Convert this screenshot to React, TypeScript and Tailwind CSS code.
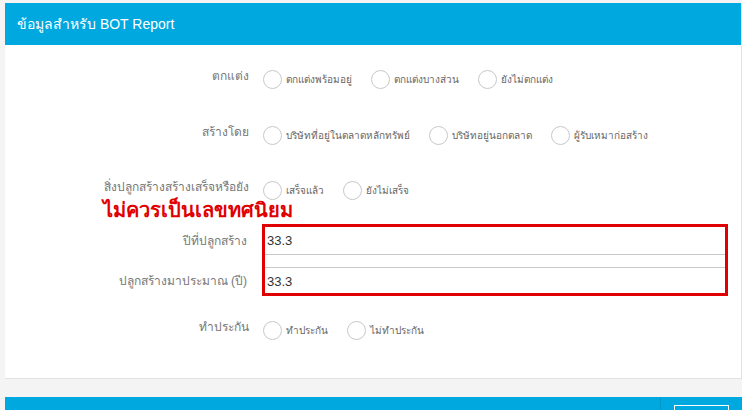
import React from "react";

const font = { fontFamily: '"Liberation Sans", "Noto Sans", Tahoma, sans-serif' };

function Radio({ label }: { label: string }) {
  return (
    <label className="flex items-center gap-[4px] text-[10px] leading-[16px] text-[#666]">
      <span className="inline-block h-[19px] w-[19px] rounded-full border border-[#c8c8c8] bg-white" />
      <span>{label}</span>
    </label>
  );
}

function RadioRow({ label, options }: { label: string; options: string[] }) {
  return (
    <div className="flex items-start">
      <div className="w-[245px] pr-[1px] text-right text-[12px] leading-[14px] text-[#777]">
        {label}
      </div>
      <div className="ml-[13px] flex items-center gap-[19px] pt-[1px]">
        {options.map((o) => (
          <Radio key={o} label={o} />
        ))}
      </div>
    </div>
  );
}

export default function App() {
  return (
    <div className="min-h-[410px] bg-[#f4f4f4] pl-[5px] pt-[3px]" style={font}>
      <div className="border-r border-b border-[#e2e2e2] bg-white">
        <div className="flex h-[42px] items-center bg-[#00a8e0] px-[12px] text-[14px] text-white">
          ข้อมูลสำหรับ BOT Report
        </div>
        <div className="pb-[38px] pt-[24px]">
          <RadioRow
            label="ตกแต่ง"
            options={["ตกแต่งพร้อมอยู่", "ตกแต่งบางส่วน", "ยังไม่ตกแต่ง"]}
          />
          <div className="mt-[36px]">
            <RadioRow
              label="สร้างโดย"
              options={["บริษัทที่อยู่ในตลาดหลักทรัพย์", "บริษัทอยู่นอกตลาด", "ผู้รับเหมาก่อสร้าง"]}
            />
          </div>
          <div className="mt-[35px]">
            <RadioRow label="สิ่งปลูกสร้างสร้างเสร็จหรือยัง" options={["เสร็จแล้ว", "ยังไม่เสร็จ"]} />
          </div>
          <div className="ml-[98px] mt-[-2px] text-[20px] font-bold leading-[24px] text-[#e00000]">
            ไม่ควรเป็นเลขทศนิยม
          </div>
          <div className="mt-[2px] flex">
            <div className="flex w-[245px] flex-col pr-[3px] text-right text-[12px] text-[#777]">
              <div className="flex h-[30px] items-center justify-end pt-[3px]">ปีที่ปลูกสร้าง</div>
              <div className="flex h-[41px] items-end justify-end pb-[5px]">ปลูกสร้างมาประมาณ (ปี)</div>
            </div>
            <div className="ml-[12px] w-[466px] border-[3px] border-[#e00000]">
              <div className="flex h-[28px] items-center border-b border-[#c8c8c8] pl-[2px] text-[13px] text-[#333]">
                33.3
              </div>
              <div className="h-[12px]" />
              <div className="flex h-[26px] items-center border-t border-[#c8c8c8] pl-[2px] pt-[2px] text-[13px] text-[#333]">
                33.3
              </div>
            </div>
          </div>
          <div className="mt-[24px]">
            <RadioRow label="ทำประกัน" options={["ทำประกัน", "ไม่ทำประกัน"]} />
          </div>
        </div>
      </div>
      <div className="mt-[18px] flex h-[14px] justify-end bg-[#00a8e0]">
        <div className="flex w-[82px] border-l border-[#0096c8] pl-[13px] pt-[8px]">
          <div className="h-[20px] w-[55px] border border-white" />
        </div>
      </div>
    </div>
  );
}
